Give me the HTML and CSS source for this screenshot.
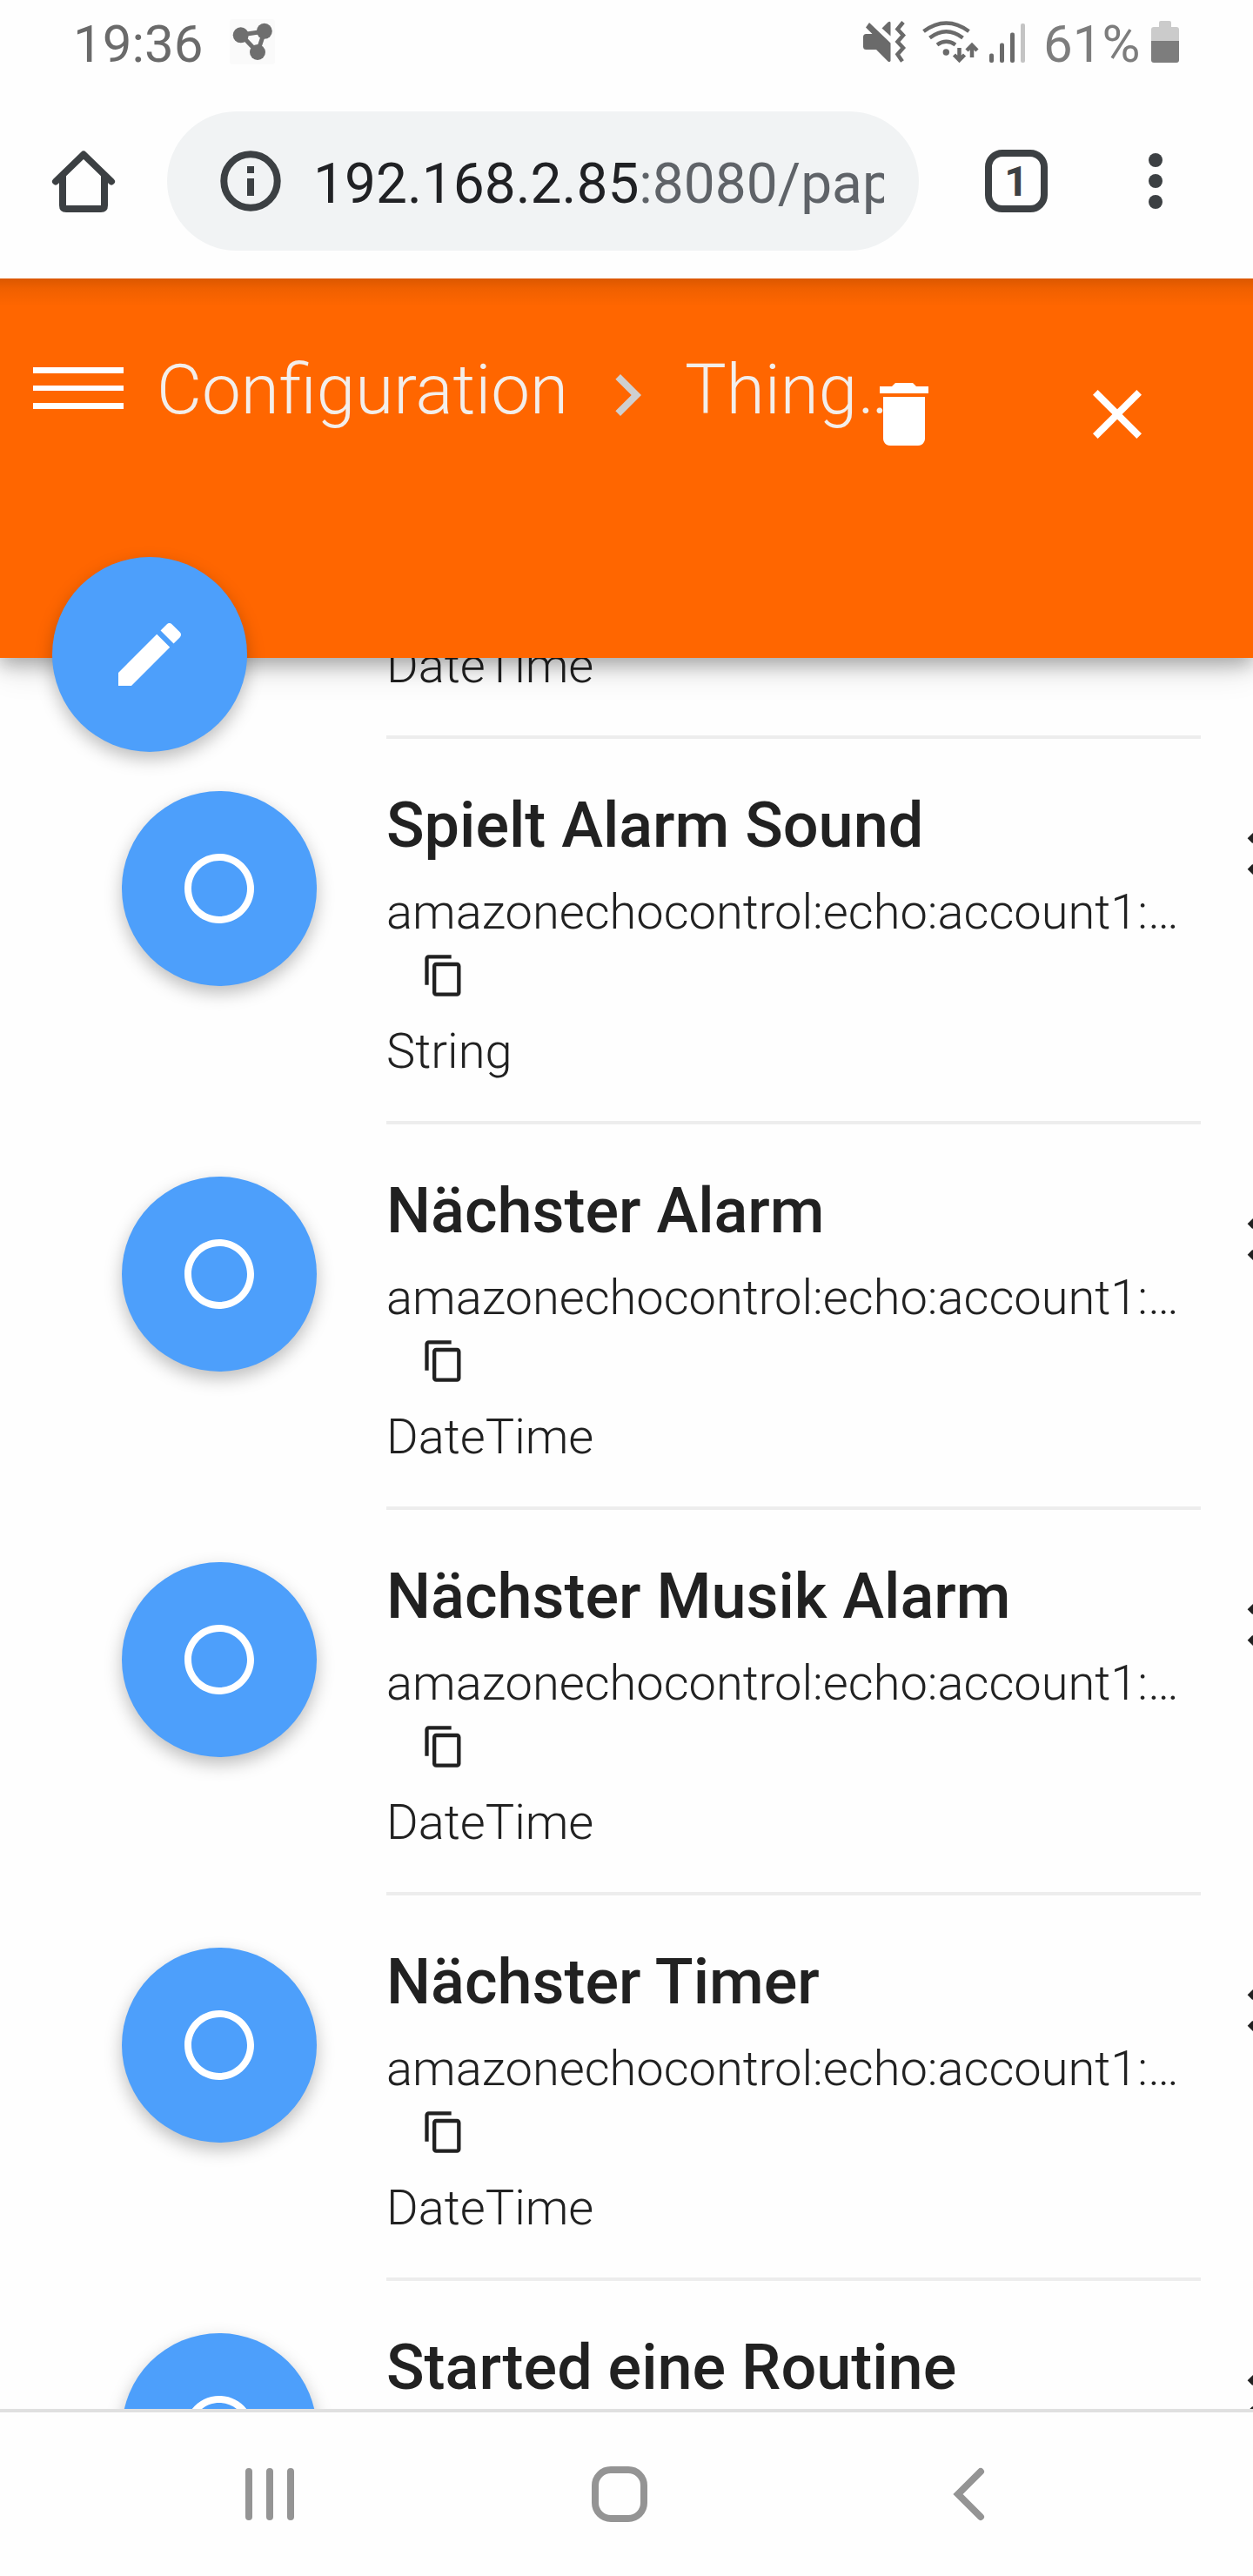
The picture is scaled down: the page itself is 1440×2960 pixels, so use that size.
FILE: index.html
```
<!DOCTYPE html>
<html lang="de">
<head>
    <meta charset="UTF-8">
    <meta name="viewport" content="width=device-width, initial-scale=1.0">
    <title>Paper UI - Configuration</title>
    <link rel="stylesheet" href="styles.css">
</head>
<body>

    <!-- shared icons -->
    <svg class="icon-defs" width="0" height="0">
        <symbol id="icon-ring" viewBox="0 0 24 24">
            <path d="M12 2C6.48 2 2 6.48 2 12s4.48 10 10 10 10-4.48 10-10S17.52 2 12 2zm0 18c-4.42 0-8-3.58-8-8s3.58-8 8-8 8 3.58 8 8-3.58 8-8 8z"/>
        </symbol>
        <symbol id="icon-copy" viewBox="0 0 24 24">
            <path d="M16 1H4c-1.1 0-2 .9-2 2v14h2V3h12V1zm3 4H8c-1.1 0-2 .9-2 2v14c0 1.1.9 2 2 2h11c1.1 0 2-.9 2-2V7c0-1.1-.9-2-2-2zm0 16H8V7h11v14z"/>
        </symbol>
        <symbol id="icon-unfold" viewBox="0 0 24 24">
            <path d="M12 5.83L15.17 9l1.41-1.41L12 3 7.41 7.59 8.83 9 12 5.83zm0 12.34L8.83 15l-1.41 1.41L12 21l4.59-4.59L15.17 15 12 18.17z"/>
        </symbol>
    </svg>

    <div class="status-bar">
        <span class="clock">19:36</span>
        <svg class="share-icon" width="52" height="52" viewBox="0 0 52 52">
            <rect width="52" height="52" rx="3" fill="#fafafa"/>
            <path d="M13 18L40 14 32 38z" fill="none" stroke="#6e6e6e" stroke-width="5"/>
            <circle cx="12.7" cy="18.3" r="9"/>
            <circle cx="39.8" cy="13.8" r="9"/>
            <circle cx="32" cy="38" r="9"/>
        </svg>
        <svg class="signal-icons" width="188" height="52" viewBox="0 0 188 52">
            <!-- muted + vibrate -->
            <path d="M3 9.500L7 4l24.500 23.500V48q-1 2-3 .5L15 35H3.500Q0 35 0 31.500V20.500Q0 17 3.500 17H10.500z"/>
            <path d="M21.500 10.500l7-7q3-2 3 1V19.500z"/>
            <path class="line" d="M46 3.500L39.500 11.500 46 18.500 39.500 26 46 33 39.500 40.500 45 48.500"/>
            <!-- wifi -->
            <path class="line" d="M69.500 14Q95.500-5 121.500 14M76.500 21.500Q95.500 7 114.500 21.500M85 29.500Q95.500 22 106 29.500"/>
            <circle cx="95.300" cy="38" r="3.700"/>
            <path class="line" d="M110.500 33V46M104.500 41l6 6 6-6M125 44V31M119 36l6-6 6 6"/>
            <!-- mobile signal -->
            <rect x="145" y="39.500" width="5" height="10.500" rx="2"/>
            <rect x="157" y="27.500" width="5" height="22.500" rx="2"/>
            <rect x="169" y="15.500" width="5" height="34.500" rx="2"/>
            <rect x="181" y="5" width="5" height="45" rx="2" fill="#c4c4c4"/>
        </svg>
        <span class="battery-text">61%</span>
        <svg class="battery-icon" width="32" height="48" viewBox="0 0 32 48">
            <path d="M0 23V10q0-3 3-3h6V2q0-2 2-2h10q2 0 2 2v5h6q3 0 3 3v13z" fill="#cbcbcb"/>
            <path d="M0 23h32v22q0 3-3 3H3q-3 0-3-3z" fill="#7d7d7d"/>
        </svg>
    </div>

    <div class="browser-bar">
        <svg class="home-icon" width="80" height="80" viewBox="0 0 80 80">
            <path d="M8 40.500L40 9.500 72 40.500M16 34V68q0 4 4 4H60q4 0 4-4V34"/>
        </svg>
        <div class="url-box">
            <svg class="info-icon" width="70" height="70" viewBox="0 0 70 70">
                <circle cx="35" cy="35" r="30.700"/>
                <path d="M35 18v8M35 32v20"/>
            </svg>
            <div class="url">192.168.2.85<span class="url-path">:8080/pap</span></div>
        </div>
        <div class="tab-count">1</div>
        <div class="menu-dots"><i></i><i></i><i></i></div>
    </div>

    <main class="page">
        <header class="app-header">
            <div class="hamburger"><i></i><i></i><i></i></div>
            <div class="breadcrumb">Configuration</div>
            <svg class="crumb-arrow" width="96" height="96" viewBox="0 0 24 24">
                <path d="M8.590 16.340l4.580-4.590-4.580-4.590L10 5.750l6 6-6 6z"/>
            </svg>
            <div class="breadcrumb current">Thing…</div>
            <div class="header-actions">
                <svg width="96" height="96" viewBox="0 0 24 24">
                    <path d="M6 19c0 1.100.9 2 2 2h8c1.100 0 2-.9 2-2V7H6v12zM19 4h-3.500l-1-1h-5l-1 1H5v2h14V4z"/>
                </svg>
                <svg width="96" height="96" viewBox="0 0 24 24">
                    <path d="M19 6.410L17.590 5 12 10.590 6.410 5 5 6.410 10.590 12 5 17.590 6.410 19 12 13.410 17.590 19 19 17.590 13.410 12z"/>
                </svg>
            </div>
            <div class="fab edit-fab">
                <svg width="96" height="96" viewBox="0 0 24 24">
                    <path d="M3 17.250V21h3.750L17.810 9.940l-3.750-3.750L3 17.250zM20.710 7.040c.39-.39.39-1.020 0-1.410l-2.340-2.340c-.39-.39-1.020-.39-1.410 0l-1.830 1.830 3.750 3.750 1.830-1.830z"/>
                </svg>
            </div>
        </header>

        <div class="channel-list">
            <div class="channel channel-cut">
                <div class="channel-body">
                    <div class="channel-type">DateTime</div>
                </div>
            </div>

            <div class="channel">
                <div class="fab"><svg width="96" height="96"><use href="#icon-ring"/></svg></div>
                <div class="channel-body">
                    <h3>Spielt Alarm Sound</h3>
                    <div class="channel-id">amazonechocontrol:echo:account1:…</div>
                    <svg class="copy-icon" width="52" height="52"><use href="#icon-copy"/></svg>
                    <div class="channel-type">String</div>
                </div>
                <svg class="unfold-icon" width="96" height="96"><use href="#icon-unfold"/></svg>
            </div>

            <div class="channel">
                <div class="fab"><svg width="96" height="96"><use href="#icon-ring"/></svg></div>
                <div class="channel-body">
                    <h3>Nächster Alarm</h3>
                    <div class="channel-id">amazonechocontrol:echo:account1:…</div>
                    <svg class="copy-icon" width="52" height="52"><use href="#icon-copy"/></svg>
                    <div class="channel-type">DateTime</div>
                </div>
                <svg class="unfold-icon" width="96" height="96"><use href="#icon-unfold"/></svg>
            </div>

            <div class="channel">
                <div class="fab"><svg width="96" height="96"><use href="#icon-ring"/></svg></div>
                <div class="channel-body">
                    <h3>Nächster Musik Alarm</h3>
                    <div class="channel-id">amazonechocontrol:echo:account1:…</div>
                    <svg class="copy-icon" width="52" height="52"><use href="#icon-copy"/></svg>
                    <div class="channel-type">DateTime</div>
                </div>
                <svg class="unfold-icon" width="96" height="96"><use href="#icon-unfold"/></svg>
            </div>

            <div class="channel">
                <div class="fab"><svg width="96" height="96"><use href="#icon-ring"/></svg></div>
                <div class="channel-body">
                    <h3>Nächster Timer</h3>
                    <div class="channel-id">amazonechocontrol:echo:account1:…</div>
                    <svg class="copy-icon" width="52" height="52"><use href="#icon-copy"/></svg>
                    <div class="channel-type">DateTime</div>
                </div>
                <svg class="unfold-icon" width="96" height="96"><use href="#icon-unfold"/></svg>
            </div>

            <div class="channel">
                <div class="fab"><svg width="96" height="96"><use href="#icon-ring"/></svg></div>
                <div class="channel-body">
                    <h3>Started eine Routine</h3>
                </div>
                <svg class="unfold-icon" width="96" height="96"><use href="#icon-unfold"/></svg>
            </div>
        </div>
    </main>

    <nav class="nav-bar">
        <svg width="64" height="64" viewBox="0 0 64 64">
            <path d="M8 6V58M32 6V58M56 6V58"/>
        </svg>
        <svg width="64" height="64" viewBox="0 0 64 64">
            <rect x="4" y="4" width="56" height="56" rx="18"/>
        </svg>
        <svg width="64" height="64" viewBox="0 0 64 64">
            <path d="M45 6L19 32 45 58"/>
        </svg>
    </nav>

</body>
</html>
```
FILE: styles.css
```
:root {
    --orange: #ff6600;
    --blue: #4d9ffb;
    --text: #212121;
    --page-bg: #fefefe;
    --chrome-icon: #3c4043;
    --status-gray: #6a6a6a;
}

* {
    box-sizing: border-box;
}

body {
    font-family: Roboto, sans-serif;
    background-color: var(--page-bg);
    color: var(--text);
    width: 1440px;
    height: 2960px;
    margin: 0;
    display: flex;
    flex-direction: column;
    overflow: hidden;
}

svg {
    display: block;
    flex-shrink: 0;
    fill: currentColor;
}

.icon-defs {
    position: absolute;
}

/* Android status bar */
.status-bar {
    display: flex;
    height: 96px;
    padding: 0 85px 0 84px;
    color: var(--status-gray);
    font-size: 60px;
    line-height: 102px;
}

.share-icon {
    margin: 22px 0 0 31px;
    color: #6e6e6e;
}

.signal-icons {
    margin: 22px 0 0 auto;
}

.signal-icons .line {
    fill: none;
    stroke: currentColor;
    stroke-width: 4.5;
}

.battery-text {
    margin-left: 19px;
    width: 112px;
    color: #7d7d7d;
}

.battery-icon {
    margin: 24px 0 0 12px;
}

/* Chrome toolbar */
.browser-bar {
    display: flex;
    align-items: center;
    height: 224px;
    padding: 0 104px 0 56px;
    color: var(--chrome-icon);
}

.home-icon,
.info-icon {
    fill: none;
    stroke: currentColor;
    stroke-width: 8;
}

.home-icon {
    stroke-linecap: round;
    stroke-linejoin: round;
}

.url-box {
    display: flex;
    align-items: center;
    width: 864px;
    height: 160px;
    margin-left: 56px;
    padding: 0 40px 0 61px;
    border-radius: 80px;
    background-color: #f1f3f4;
}

.url {
    flex: 1;
    margin-left: 37px;
    font-size: 64px;
    line-height: 84px;
    padding-top: 8px;
    color: #202124;
    white-space: nowrap;
    overflow: hidden;
}

.url-path {
    color: #5f6368;
}

.tab-count {
    width: 72px;
    height: 72px;
    margin-left: 76px;
    border: 8px solid var(--chrome-icon);
    border-radius: 20px;
    font-size: 48px;
    font-weight: 700;
    line-height: 58px;
    text-align: center;
}

.menu-dots {
    display: flex;
    flex-direction: column;
    gap: 8px;
    margin-left: auto;
}

.menu-dots i {
    width: 16px;
    height: 16px;
    border-radius: 50%;
    background-color: var(--chrome-icon);
}

/* Paper UI */
.page {
    height: 2448px;
    display: flex;
    flex-direction: column;
    overflow: hidden;
}

.app-header {
    position: relative;
    z-index: 1;
    display: flex;
    align-items: flex-start;
    flex-shrink: 0;
    height: 436px;
    padding: 84px 0 0 38px;
    color: #fff;
    background: linear-gradient(rgba(0, 0, 0, 0.14), rgba(0, 0, 0, 0.06) 12px, rgba(0, 0, 0, 0) 32px) var(--orange);
    box-shadow: 0 8px 20px 0 rgba(0, 0, 0, 0.26), 0 8px 40px 0 rgba(0, 0, 0, 0.16);
}

.hamburger {
    display: flex;
    flex-direction: column;
    gap: 14px;
    width: 104px;
    margin-top: 18px;
}

.hamburger i {
    height: 6.500px;
    background-color: #fff;
}

.breadcrumb {
    margin-left: 38px;
    font-size: 80px;
    font-weight: 300;
    line-height: 88px;
    color: #f3eeea;
    white-space: nowrap;
}

.crumb-arrow {
    margin: 3px 0 0 20px;
    color: #cfcfcf;
}

.breadcrumb.current {
    margin-left: 18px;
}

.header-actions {
    position: absolute;
    top: 108px;
    right: 108px;
    display: flex;
    gap: 149px;
}

.fab {
    display: flex;
    align-items: center;
    justify-content: center;
    flex-shrink: 0;
    width: 224px;
    height: 224px;
    border-radius: 50%;
    color: #fff;
    background-color: var(--blue);
    box-shadow: 0 8px 20px 0 rgba(0, 0, 0, 0.26);
}

.edit-fab {
    position: absolute;
    left: 60px;
    bottom: -108px;
}

/* Channels */
.channel-list {
    flex: 1;
    overflow: hidden;
}

.channel {
    display: flex;
    align-items: flex-start;
    height: 443px;
    padding-left: 140px;
}

.channel .fab {
    margin-top: 60px;
}

.channel-body {
    flex-shrink: 0;
    width: 936px;
    height: 443px;
    margin-left: 80px;
    padding-top: 50px;
    border-bottom: 4px solid #ededed;
}

.channel h3 {
    margin: 0 0 9px;
    font-size: 72px;
    font-weight: 500;
    line-height: 100px;
}

.channel-id,
.channel-type {
    font-size: 56px;
    font-weight: 300;
    line-height: 80px;
    white-space: nowrap;
}

.copy-icon {
    margin: 7px 0 21px 40px;
}

.unfold-icon {
    margin: 84px 0 0 24px;
}

/* row scrolled under the header */
.channel-cut {
    height: 93px;
    padding-left: 364px;
}

.channel-cut .channel-body {
    height: 93px;
    padding-top: 0;
}

.channel-cut .channel-type {
    margin-top: -31px;
}

/* Android navigation */
.nav-bar {
    display: flex;
    justify-content: space-between;
    height: 192px;
    padding: 62px 294px 0 278px;
    border-top: 4px solid #e0e0e0;
}

.nav-bar svg {
    fill: none;
    stroke: #949494;
    stroke-width: 8;
    stroke-linecap: round;
}
```
